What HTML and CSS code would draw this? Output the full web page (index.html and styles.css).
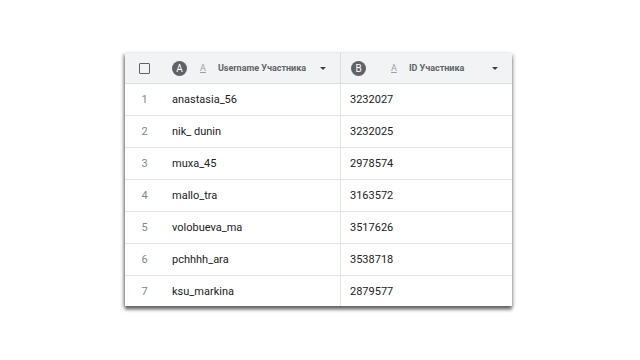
FILE: index.html
```html
<!DOCTYPE html>
<html lang="ru">
<head>
<meta charset="UTF-8">
<title>Участники</title>
<link rel="stylesheet" href="styles.css">
</head>
<body>
<div class="page">
    <div class="sheet">
        <div class="row head">
            <div class="cell num"><span class="box"></span></div>
            <div class="cell col-a">
                <span class="badge">A</span>
                <span class="type">A</span>
                <span class="title">Username Участника</span>
                <span class="caret"></span>
            </div>
            <div class="cell col-b">
                <span class="badge">B</span>
                <span class="type">A</span>
                <span class="title">ID Участника</span>
                <span class="caret"></span>
            </div>
        </div>
        <div class="row"><div class="cell num">1</div><div class="cell col-a">anastasia_56</div><div class="cell col-b">3232027</div></div>
        <div class="row"><div class="cell num">2</div><div class="cell col-a">nik_ dunin</div><div class="cell col-b">3232025</div></div>
        <div class="row"><div class="cell num">3</div><div class="cell col-a">muxa_45</div><div class="cell col-b">2978574</div></div>
        <div class="row"><div class="cell num">4</div><div class="cell col-a">mallo_tra</div><div class="cell col-b">3163572</div></div>
        <div class="row"><div class="cell num">5</div><div class="cell col-a">volobueva_ma</div><div class="cell col-b">3517626</div></div>
        <div class="row"><div class="cell num">6</div><div class="cell col-a">pchhhh_ara</div><div class="cell col-b">3538718</div></div>
        <div class="row last"><div class="cell num">7</div><div class="cell col-a">ksu_markina</div><div class="cell col-b">2879577</div></div>
    </div>
</div>
</body>
</html>
```

FILE: styles.css
```css
body {
    margin: 0;
    background: #fff;
    font-family: Roboto, "Noto Sans", sans-serif;
    color: #202124;
}

.page {
    height: 360px;
    padding: 53px 0 0 125px;
    box-sizing: border-box;
}

.sheet {
    width: 387px;
    background: #fff;
    box-shadow: 0 4px 3px rgba(0, 0, 0, 0.45), -2px 1px 3px rgba(0, 0, 0, 0.3), 2px 1px 3px rgba(0, 0, 0, 0.15);
}

.row {
    display: grid;
    grid-template-columns: 37px 179px 1fr;
    height: 32px;
    border-bottom: 1px solid #e3e3e3;
    box-sizing: border-box;
    font-size: 11px;
}

.row.last {
    border-bottom: none;
    height: 30px;
}

.row.head {
    height: 31px;
    background: #f1f3f4;
    border-bottom: 1px solid #dadce0;
}

.cell {
    display: flex;
    align-items: center;
}

.num {
    justify-content: center;
    color: #80868b;
    padding-left: 2px;
}

.col-a {
    padding-left: 10px;
    border-right: 1px solid #e3e3e3;
}

.col-b {
    padding-left: 9px;
}

.head .col-a,
.head .col-b {
    padding-left: 10px;
    padding-right: 14px;
}

.head .col-a {
    border-right-color: #dadce0;
}

.box {
    width: 9px;
    height: 9px;
    border: 1.5px solid #5f6368;
    border-radius: 1px;
}

.badge {
    width: 15px;
    height: 15px;
    border-radius: 50%;
    background: #5f6368;
    color: #fff;
    font-size: 10px;
    display: flex;
    align-items: center;
    justify-content: center;
}

.type {
    margin-left: 13px;
    font-size: 9px;
    color: #9aa0a6;
    text-decoration: underline;
}

.title {
    margin-left: 12px;
    font-size: 9px;
    font-weight: bold;
    color: #5f6368;
}

.col-b .type {
    margin-left: 25px;
}

.col-b .title {
    margin-left: 12px;
}

.caret {
    margin-left: auto;
    width: 0;
    height: 0;
    border-left: 3px solid transparent;
    border-right: 3px solid transparent;
    border-top: 3px solid #3c4043;
}
```
